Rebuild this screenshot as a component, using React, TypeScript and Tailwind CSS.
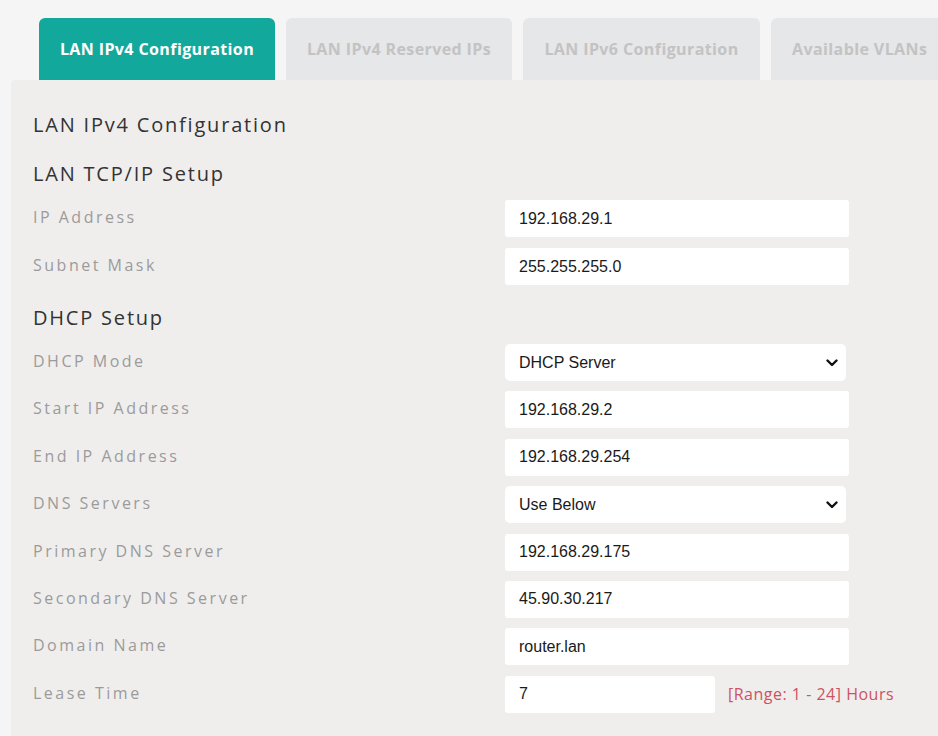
import React from "react";

const font = { fontFamily: '"Open Sans", "Noto Sans", sans-serif' };

function Chevron() {
  return (
    <svg width="12" height="8" viewBox="0 0 12 8" className="mr-[8px]">
      <path d="M1.5 1.5 L6 6 L10.5 1.5" fill="none" stroke="#111" strokeWidth="2.4" strokeLinecap="round" strokeLinejoin="round" />
    </svg>
  );
}

function Row({ label, children }: { label: string; children: React.ReactNode }) {
  return (
    <div className="flex items-center h-[37px]">
      <div className="w-[472px] shrink-0 pb-[3px] text-[16px] tracking-[2.5px] text-[#9b9b9b]">{label}</div>
      {children}
    </div>
  );
}

function Field({ value, w = "w-[344px]" }: { value: string; w?: string }) {
  return (
    <div
      className={`${w} h-[37px] bg-white rounded-[3px] flex items-center pl-[14px] text-[16px] text-[#1a1a1a]`}
      style={{ fontFamily: '"Liberation Sans", Arial, sans-serif' }}
    >
      {value}
    </div>
  );
}

function Select({ value }: { value: string }) {
  return (
    <div
      className="w-[341px] h-[37px] bg-white rounded-[5px] flex items-center justify-between pl-[14px] text-[16px] text-[#1a1a1a]"
      style={{ fontFamily: '"Liberation Sans", Arial, sans-serif' }}
    >
      <span>{value}</span>
      <Chevron />
    </div>
  );
}

function Heading({ children, className = "" }: { children: React.ReactNode; className?: string }) {
  return (
    <div className={`h-[30px] flex items-center text-[20px] tracking-[1.8px] text-[#333] ${className}`}>{children}</div>
  );
}

export default function App() {
  const tabs = [
    { t: "LAN IPv4 Configuration", w: "w-[236px] justify-center", active: true },
    { t: "LAN IPv4 Reserved IPs", w: "w-[226px] justify-center" },
    { t: "LAN IPv6 Configuration", w: "w-[237px] justify-center" },
    { t: "Available VLANs", w: "pl-[21px] pr-[21px] justify-start" },
  ];
  return (
    <div className="w-[938px] h-[736px] overflow-hidden bg-[#f5f5f5] flex flex-col" style={font}>
      <div className="flex gap-[11px] pl-[39px] pt-[18px] shrink-0">
        {tabs.map((tab) => (
          <div
            key={tab.t}
            className={`${tab.w} shrink-0 h-[62px] rounded-t-[6px] flex items-center text-[16px] font-bold tracking-[0.4px] whitespace-nowrap ${
              tab.active ? "bg-[#13a89c] text-white" : "bg-[#e6e7e8] text-[#c3c3c4]"
            }`}
          >
            {tab.t}
          </div>
        ))}
      </div>
      <div className="ml-[11px] flex-1 bg-[#efeeed] rounded-tl-[4px] pl-[22px] pt-[30px]">
        <Heading className="mb-[19px]">LAN IPv4 Configuration</Heading>
        <Heading className="mb-[11px]">LAN TCP/IP Setup</Heading>
        <div className="flex flex-col gap-[11px]">
          <Row label="IP Address"><Field value="192.168.29.1" /></Row>
          <Row label="Subnet Mask"><Field value="255.255.255.0" /></Row>
        </div>
        <Heading className="mt-[18px] mb-[11px]">DHCP Setup</Heading>
        <div className="flex flex-col gap-[10.4px]">
          <Row label="DHCP Mode"><Select value="DHCP Server" /></Row>
          <Row label="Start IP Address"><Field value="192.168.29.2" /></Row>
          <Row label="End IP Address"><Field value="192.168.29.254" /></Row>
          <Row label="DNS Servers"><Select value="Use Below" /></Row>
          <Row label="Primary DNS Server"><Field value="192.168.29.175" /></Row>
          <Row label="Secondary DNS Server"><Field value="45.90.30.217" /></Row>
          <Row label="Domain Name"><Field value="router.lan" /></Row>
          <Row label="Lease Time">
            <Field value="7" w="w-[210px]" />
            <span className="ml-[13px] text-[16px] tracking-[0.5px] text-[#cd5361]">[Range: 1 - 24] Hours</span>
          </Row>
        </div>
      </div>
    </div>
  );
}
